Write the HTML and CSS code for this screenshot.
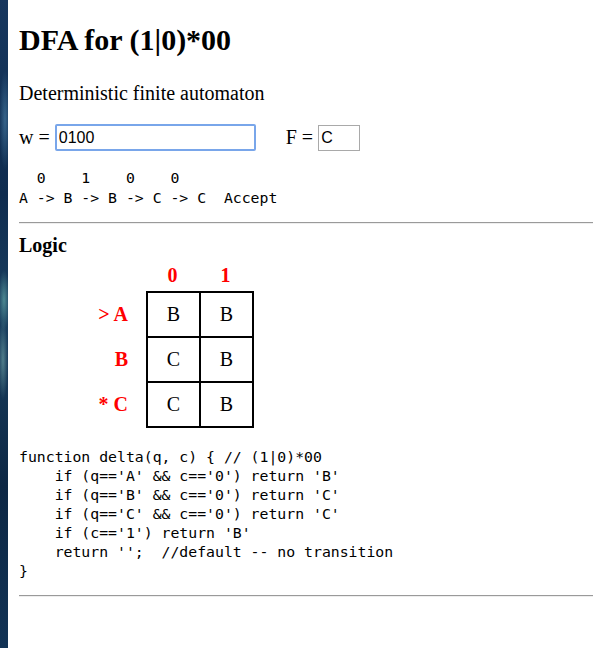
FILE: index.html
```html
<!DOCTYPE html>
<html>
<head>
<meta charset="utf-8">
<title>DFA</title>
<link rel="stylesheet" href="styles.css">
</head>
<body>
<h1 class="title">DFA for (1|0)*00</h1>
<p class="subtitle">Deterministic finite automaton</p>
<div class="inputs">
  <label class="field">w = <input class="w-input" type="text" value="0100"></label>
  <label class="field f-field">F = <input class="f-input" type="text" value="C"></label>
</div>
<pre class="trace">  0    1    0    0
A -&gt; B -&gt; B -&gt; C -&gt; C  Accept</pre>
<hr class="rule">
<h4 class="section">Logic</h4>
<div class="dfa">
  <div class="head-row">
    <span class="head">0</span>
    <span class="head">1</span>
  </div>
  <div class="body-row">
    <div class="labels">
      <div class="label">&gt; A</div>
      <div class="label">B</div>
      <div class="label">* C</div>
    </div>
    <div class="grid">
      <div class="cell">B</div><div class="cell">B</div>
      <div class="cell">C</div><div class="cell">B</div>
      <div class="cell">C</div><div class="cell">B</div>
    </div>
  </div>
</div>
<pre class="code">function delta(q, c) { // (1|0)*00
    if (q=='A' &amp;&amp; c=='0') return 'B'
    if (q=='B' &amp;&amp; c=='0') return 'C'
    if (q=='C' &amp;&amp; c=='0') return 'C'
    if (c=='1') return 'B'
    return '';  //default -- no transition
}</pre>
<hr class="rule">
</body>
</html>
```
FILE: styles.css
```css
html {
  margin: 0;
  min-height: 100%;
  background:
    radial-gradient(ellipse 6px 30px at 4px 300px, rgba(120,200,190,0.55), transparent),
    radial-gradient(ellipse 5px 40px at 3px 360px, rgba(150,210,200,0.45), transparent),
    radial-gradient(ellipse 6px 50px at 5px 120px, rgba(90,150,190,0.5), transparent),
    linear-gradient(180deg, #17375e 0%, #0f2c4f 30%, #1a3f5f 50%, #0d2744 75%, #123355 100%);
}
body {
  margin: 0 0 0 8px;
  padding: 1px 0 40px 11px;
  background: #fff;
  min-height: 648px;
  box-sizing: border-box;
  font-family: "Liberation Serif", "Times New Roman", serif;
  font-size: 20px;
  color: #000;
}
.title {
  font-size: 30px;
  font-weight: bold;
  margin: 22px 0 0 0;
  line-height: 34px;
}
.subtitle {
  margin: 24px 0 0 0;
  line-height: 24px;
}
.inputs {
  display: flex;
  align-items: center;
  margin-top: 19px;
  height: 27px;
}
.field {
  display: flex;
  align-items: center;
}
.w-input {
  margin-left: 5px;
  width: 201px;
  height: 27px;
  box-sizing: border-box;
  border: 2px solid #79a6ea;
  border-radius: 2px;
  padding: 0 2px;
  font-family: "Liberation Sans", Arial, sans-serif;
  font-size: 16px;
  color: #000;
  outline: none;
}
.f-field {
  margin-left: 30px;
}
.f-input {
  margin-left: 5px;
  width: 42px;
  height: 26px;
  box-sizing: border-box;
  border: 1px solid #a9a9a9;
  padding: 0 2px;
  font-family: "Liberation Sans", Arial, sans-serif;
  font-size: 16px;
  color: #000;
}
.trace, .code {
  font-family: "DejaVu Sans Mono", monospace;
  font-size: 14.8px;
  line-height: 20px;
  margin: 0;
}
.trace {
  margin-top: 17px;
}
.code {
  line-height: 19px;
  margin-top: 19px;
}
.rule {
  margin: 14px 0 0 0;
  border: 0;
  border-top: 1px solid #9a9a9a;
  border-bottom: 1px solid #eeeeee;
  height: 0;
}
.code + .rule {
  margin-top: 15px;
}
.section {
  font-size: 20px;
  font-weight: bold;
  margin: 9px 0 0 0;
  line-height: 24px;
}
.dfa {
  margin-top: 6px;
}
.head-row {
  display: flex;
  margin-left: 127px;
  height: 24px;
  line-height: 24px;
}
.head {
  width: 53px;
  text-align: center;
  color: #ff0000;
  font-weight: bold;
}
.body-row {
  display: flex;
  margin-top: 4px;
}
.labels {
  width: 127px;
  display: flex;
  flex-direction: column;
  padding-top: 2px;
}
.label {
  height: 45px;
  line-height: 43px;
  text-align: right;
  padding-right: 18px;
  box-sizing: border-box;
  color: #ff0000;
  font-weight: bold;
}
.grid {
  display: grid;
  grid-template-columns: 51px 51px;
  grid-auto-rows: 43px;
  gap: 2px;
  padding: 2px;
  background: #000;
}
.cell {
  background: #fff;
  text-align: center;
  line-height: 43px;
}
```
